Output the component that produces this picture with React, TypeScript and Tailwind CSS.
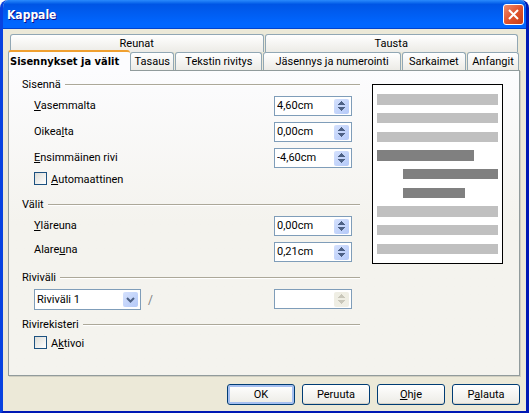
import { useState, type ReactNode } from 'react';

const topTabs = ['Reunat', 'Tausta'];
const tabs = ['Sisennykset ja välit', 'Tasaus', 'Tekstin rivitys', 'Jäsennys ja numerointi', 'Sarkaimet', 'Anfangit'];

// x, y, width, height, fill of each line in the paragraph preview
const previewLines: [number, number, number, number, string][] = [
  [4, 9, 121, 11, '#c0c0c0'],
  [4, 28, 121, 10, '#c0c0c0'],
  [4, 47, 121, 10, '#c0c0c0'],
  [4, 65, 97, 11, '#808080'],
  [30, 84, 95, 10, '#808080'],
  [30, 103, 62, 10, '#808080'],
  [4, 121, 121, 11, '#c0c0c0'],
  [4, 140, 121, 10, '#c0c0c0'],
  [4, 159, 121, 10, '#c0c0c0'],
];

function Heading({ children, className }: { children: ReactNode; className?: string }) {
  return (
    <h2 className={`flex h-4 items-center gap-1 mb-[3px] ${className ?? ''}`}>
      {children}
      <span className="h-[2px] flex-1 border-t border-[#aca899] bg-white" />
    </h2>
  );
}

function Spinner({ id, value, disabled, label }: { id: string; value: string; disabled?: boolean; label?: string }) {
  const [text, setText] = useState(value);

  const step = (delta: number) => {
    const next = parseFloat(text.replace(',', '.')) + delta;
    setText(`${next.toFixed(2).replace('.', ',')}cm`);
  };

  const color = disabled ? 'bg-[#efeee4] text-[#c9c7ba]' : 'bg-linear-to-br from-[#d5e1fd] to-[#b4c9f8] text-[#4d6185]';

  return (
    <div className="flex h-5 w-[78px] shrink-0 items-center border border-[#7f9db9] bg-white pr-[2px]">
      <input
        id={id}
        aria-label={label}
        value={text}
        disabled={disabled}
        onChange={(e) => setText(e.target.value)}
        className="min-w-0 flex-1 bg-transparent pl-[2px] outline-none"
      />
      <div className={`flex h-[15px] w-[15px] flex-col rounded-xs ${color}`}>
        <button type="button" aria-label="+" disabled={disabled} onClick={() => step(0.1)} className="flex flex-1 items-end justify-center pb-px">
          <svg width="7" height="4" viewBox="0 0 7 4" fill="currentColor" shapeRendering="crispEdges">
            <path d="M3 0h1v1h1v1h1v1h1v1H0V3h1V2h1V1h1z" />
          </svg>
        </button>
        <button type="button" aria-label="-" disabled={disabled} onClick={() => step(-0.1)} className="flex flex-1 items-start justify-center pt-px">
          <svg width="7" height="4" viewBox="0 0 7 4" fill="currentColor" shapeRendering="crispEdges">
            <path d="M0 0h7v1H6v1H5v1H4v1H3V3H2V2H1V1H0z" />
          </svg>
        </button>
      </div>
    </div>
  );
}

function Field({ id, value, top, children }: { id: string; value: string; top?: boolean; children: ReactNode }) {
  return (
    <div className={`flex justify-between pl-3 ${top ? 'items-start' : 'items-center'}`}>
      <label htmlFor={id}>{children}</label>
      <Spinner id={id} value={value} />
    </div>
  );
}

function Checkbox({ children }: { children: ReactNode }) {
  return (
    <label className="flex h-[14px] items-start gap-1 pl-3">
      <input
        type="checkbox"
        className="size-[13px] appearance-none border border-[#1c5180] bg-linear-to-br from-[#dcdcd7] to-white checked:bg-[#21a121]"
      />
      <span>{children}</span>
    </label>
  );
}

function DialogButton({ children, primary }: { children: ReactNode; primary?: boolean }) {
  return (
    <button
      type="button"
      className={`h-[21px] w-[68px] rounded-[3px] border border-[#003c74] bg-linear-to-b from-white to-[#ecebe5] ${
        primary ? 'shadow-[inset_0_0_0_2px_#a5bff0]' : 'shadow-[inset_0_-1px_0_#d6d0c5]'
      }`}
    >
      {children}
    </button>
  );
}

export default function App() {
  const [active, setActive] = useState(tabs[0]);
  const tabStyle = 'rounded-t-[3px] border border-b-0 border-[#91a7b4] whitespace-nowrap';

  return (
    <div className="flex min-h-screen flex-col overflow-hidden rounded-t-lg border-x-[3px] border-b-[3px] border-t-[#0831d9] border-r-[#0019b4] border-b-[#0019b4] border-l-[#0842e0] bg-[#ece9d8] font-[Roboto,sans-serif] text-[11px] leading-4 text-black">
      <header className="flex h-[29px] items-center justify-between bg-linear-to-b from-[#2a8afc] from-0% via-[#0055e5] via-15% to-[#0066ff] to-80% pr-[2px] pl-1 shadow-[inset_0_-1px_#0043cf]">
        <h1 className="pt-px font-['DejaVu_Sans_Condensed',sans-serif] text-[12px] font-bold text-white [text-shadow:1px_1px_#0f1089]">Kappale</h1>
        <button type="button" aria-label="Sulje" className="flex size-[21px] items-center justify-center rounded-[3px] border border-white bg-linear-to-br from-[#ec8b6d] via-[#e0532d] to-[#c83c14]">
          <svg width="11" height="11" viewBox="0 0 11 11" stroke="white" strokeWidth="2">
            <path d="M1 1l9 9M10 1l-9 9" />
          </svg>
        </button>
      </header>

      <main className="flex flex-1 flex-col pt-[5px] pr-[6px] pl-[5px]">
        <div className="grid grid-cols-2 gap-px px-[2px]">
          {topTabs.map((tab) => (
            <button key={tab} type="button" className={`h-[18px] bg-linear-to-b from-white to-[#ecebe6] ${tabStyle}`}>
              {tab}
            </button>
          ))}
        </div>
        <nav className="grid grid-cols-[122fr_45fr_88fr_138fr_65fr_53fr]">
          {tabs.map((tab) => (
            <button
              key={tab}
              type="button"
              onClick={() => setActive(tab)}
              className={
                tab === active
                  ? "relative -mt-[2px] -mb-px h-[21px] rounded-t-[3px] border-t-2 border-l border-t-[#f0a030] border-l-[#91a7b4] bg-[#fcfcfe] pl-px text-left font-['DejaVu_Sans_Condensed',sans-serif] font-bold whitespace-nowrap"
                  : `mr-px h-[18px] bg-linear-to-b from-white to-[#ecebe6] ${tabStyle}`
              }
            >
              {tab}
            </button>
          ))}
        </nav>

        <section className="flex items-start gap-3 border border-[#919b9c] bg-linear-to-b from-[#fcfcfe] to-[#f4f3ee] to-50% pt-[6px] pr-4 pb-[25px] pl-[13px] shadow-[1px_1px_#d0cec0]">
          <div className="flex-1">
            <Heading>Sisennä</Heading>
            <div className="flex flex-col gap-[6px] pr-2">
              <Field id="left" value="4,60cm"><u>V</u>asemmalta</Field>
              <Field id="right" value="0,00cm">Oikea<u>l</u>ta</Field>
              <Field id="first" value="-4,60cm"><u>E</u>nsimmäinen rivi</Field>
            </div>
            <div className="mt-1">
              <Checkbox><u>A</u>utomaattinen</Checkbox>
            </div>

            <Heading className="mt-[11px]">Välit</Heading>
            <div className="flex flex-col gap-[6px] pr-2">
              <Field id="above" value="0,00cm"><u>Y</u>läreuna</Field>
              <Field id="below" value="0,21cm" top>Alare<u>u</u>na</Field>
            </div>

            <Heading className="mt-2">Riviväli</Heading>
            <div className="flex items-start pr-2 pl-3">
              <div className="relative">
                <select aria-label="Riviväli" className="h-[21px] w-[107px] appearance-none border border-[#7f9db9] bg-white pl-[2px]">
                  <option>Riviväli 1</option>
                  <option>Riviväli 1,5</option>
                  <option>Kaksinkertainen</option>
                </select>
                <span className="pointer-events-none absolute top-[3px] right-[3px] flex size-[15px] items-center justify-center rounded-xs bg-linear-to-br from-[#d5e1fd] to-[#b4c9f8]">
                  <svg width="9" height="6" viewBox="0 0 9 6" fill="none" stroke="#4d6185" strokeWidth="2">
                    <path d="M1 1l3.500 3.500L8 1" />
                  </svg>
                </span>
              </div>
              <span className="flex-1 pt-[3px] pl-[7px] text-[12px] text-[#808080]">/</span>
              <Spinner id="spacing" value="" label="Arvo" disabled />
            </div>

            <Heading className="mt-[7px]">Rivirekisteri</Heading>
            <Checkbox>A<u>k</u>tivoi</Checkbox>
          </div>

          <svg className="mt-[7px] box-border h-[180px] w-[131px] shrink-0 border border-black bg-white" viewBox="0 0 129 178" shapeRendering="crispEdges">
            {previewLines.map(([x, y, width, height, fill]) => (
              <rect key={y} x={x} y={y} width={width} height={height} fill={fill} />
            ))}
          </svg>
        </section>

        <footer className="flex justify-end gap-[7px] pt-2 pb-[6px]">
          <DialogButton primary>OK</DialogButton>
          <DialogButton>Peruuta</DialogButton>
          <DialogButton><u>O</u>hje</DialogButton>
          <DialogButton>P<u>a</u>lauta</DialogButton>
        </footer>
      </main>
    </div>
  );
}
